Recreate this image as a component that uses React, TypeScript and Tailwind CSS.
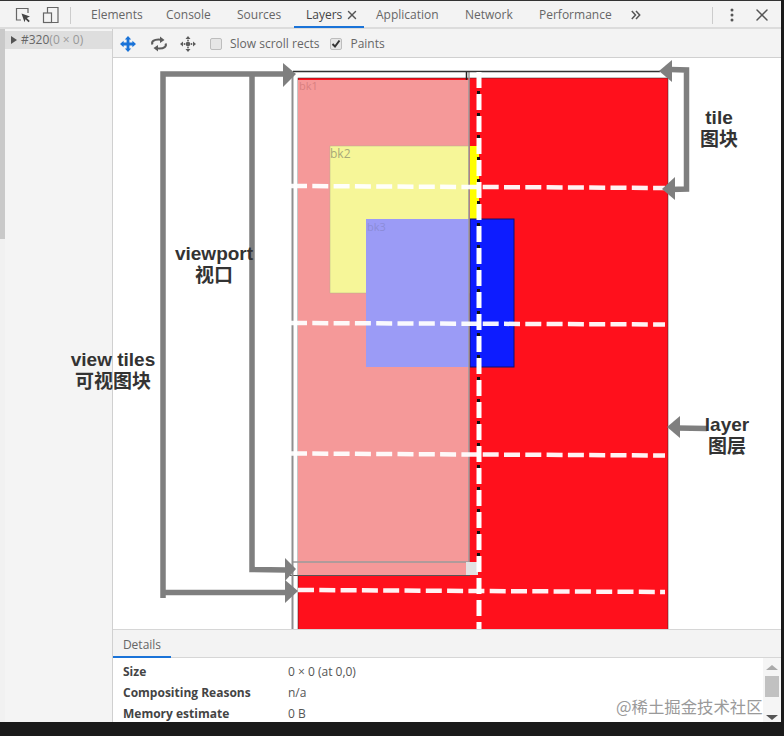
import React from "react";
import { X } from "lucide-react";

const tabs = [
    { name: "Elements", w: "w-[75px]" },
    { name: "Console", w: "w-[71px]" },
    { name: "Sources", w: "w-[69px]" },
    { name: "Layers", w: "w-[70px]" },
    { name: "Application", w: "w-[89px]" },
    { name: "Network", w: "w-[74px]" },
    { name: "Performance", w: "w-[93px]" },
];

const details = [
    { label: "Size", value: "0 × 0 (at 0,0)" },
    { label: "Compositing Reasons", value: "n/a" },
    { label: "Memory estimate", value: "0 B" },
];

const sans = "font-['Open_Sans','Noto_Sans',sans-serif]";
const label = "absolute -translate-x-1/2 whitespace-nowrap text-center text-[19px] leading-[22px] font-bold text-[#333] font-['Liberation_Sans','Noto_Sans_CJK_SC',sans-serif]";

function Toolbar() {
    return (
        <div className="flex h-[29px] shrink-0 items-center border-b border-[#d0d0d0] bg-[#f3f3f3] pt-[2px] text-[12px] text-[#666]">
            {/* pan, rotate, move */}
            <svg width="18" height="18" viewBox="0 0 18 18" className="ml-[6px]" fill="#1a73d8">
                <path d="M9 1l3.200 3.600h-1.800v3h3v-1.800l3.600 3.200-3.600 3.200v-1.800h-3v3h1.800l-3.200 3.600-3.200-3.600h1.800v-3h-3v1.800l-3.600-3.200 3.600-3.200v1.800h3v-3h-1.800z" />
            </svg>
            <svg width="18" height="18" viewBox="0 0 18 18" className="ml-[13px]" fill="none" stroke="#5c5c5c" strokeWidth="2">
                <path d="M2.500 9.500C1 6.500 4 4.500 8.500 4.500c1.500 0 3 .2 4 .6" />
                <path d="M15.500 8.500c1.500 3-1.500 5-6 5-1.500 0-3-.2-4-.6" />
                <path d="M10 1.500l4.500 3.500-4.500 3zM8 16.500l-4.500-3.500 4.500-3z" fill="#5c5c5c" stroke="none" />
            </svg>
            <svg width="18" height="18" viewBox="0 0 18 18" className="ml-[11px]" fill="#5c5c5c">
                <path d="M9 1l2.500 3h-5zM9 17l2.500-3h-5zM1 9l3-2.500v5zM17 9l-3-2.500v5z" />
                <circle cx="9" cy="9" r="2.300" />
                <circle cx="5.500" cy="9" r="0.900" />
                <circle cx="12.500" cy="9" r="0.900" />
                <circle cx="9" cy="5.500" r="0.900" />
                <circle cx="9" cy="12.500" r="0.900" />
            </svg>
            <span className="ml-[13px] h-3 w-3 rounded-[2px] border border-[#bdbdbd] bg-[#e6e6e6]" />
            <span className={`ml-[8px] ${sans}`}>Slow scroll rects</span>
            <span className="ml-[11px] flex h-3 w-3 items-center justify-center rounded-[2px] border border-[#bdbdbd] bg-[#e6e6e6]">
                <svg width="10" height="10" viewBox="0 0 10 10" fill="none" stroke="#333" strokeWidth="2">
                    <path d="M1.500 5l2.500 2.500 4.500-6" />
                </svg>
            </span>
            <span className={`ml-[8px] ${sans}`}>Paints</span>
        </div>
    );
}

// the layers diagram and the hand-drawn notes on top of it, in page coordinates
function Diagram() {
    return (
        <svg width="784" height="736" viewBox="0 0 784 736" className="pointer-events-none absolute top-0 left-0">
            <defs>
                <clipPath id="canvas">
                    <rect x="113" y="58" width="667" height="571" />
                </clipPath>
            </defs>
            <g clipPath="url(#canvas)">
                <rect x="298" y="78" width="370" height="560" fill="#ff101c" stroke="#222" strokeWidth="0.500" />
                <rect x="470" y="146" width="9" height="73" fill="#ffff00" />
                <rect x="470" y="219" width="44" height="148" fill="#0d1cff" stroke="#10106a" strokeWidth="1" />
                <rect x="298" y="80" width="171" height="495" fill="#f59999" />
                <rect x="330" y="146" width="139" height="147" fill="#f6f698" stroke="#b5b58a" strokeWidth="0.500" />
                <rect x="366" y="219" width="103" height="148" fill="#9b9bf6" />
                <path d="M469 72V562H293" fill="none" stroke="#9a9a9a" strokeWidth="1.500" />
                <rect x="466" y="562" width="12" height="13" fill="#e2e2e2" />
                <path d="M290 575.500h180" stroke="#555" strokeWidth="1" />
                <path d="M466.500 80V71.500" fill="none" stroke="#222" strokeWidth="1.500" />
                <path d="M293 71.500h367" stroke="#333" strokeWidth="1.300" />
                <path d="M292.500 72V630" stroke="#8f8f8f" strokeWidth="2" />
                <path d="M478.500 80V570" stroke="#111" strokeWidth="3" strokeDasharray="3 19" strokeDashoffset="-11" />
                <path d="M479 72V630" stroke="#fff" strokeWidth="5" strokeDasharray="16 6" />
                <g stroke="#fff" strokeWidth="4.500" strokeDasharray="16 5.300" fill="none" opacity="0.950">
                    <path d="M291 186L665 188" />
                    <path d="M291 323L665 324.500" />
                    <path d="M291 453.500L665 455.500" />
                    <path d="M298 590L665 592" />
                </g>
            </g>
            <g stroke="#7f7f7f" strokeWidth="5.500" fill="none">
                <path d="M163 598V74H285" />
                <path d="M163 592.500H286" />
                <path d="M252 75V569.500L286 570" />
                <path d="M670 69.500L686.500 70V189L670 189.500" />
                <path d="M676 428L707 428.500" />
            </g>
            <g fill="#7f7f7f">
                <path d="M283 63L296 74L283 87z" />
                <path d="M285 580L298 591L285 603z" />
                <path d="M285 558L296 569L285 581z" />
                <path d="M659 71L672 60V82z" />
                <path d="M662 189L675 177V200z" />
                <path d="M667 427L680 416V438z" />
            </g>
        </svg>
    );
}

export default function App() {
    return (
        <div className="relative h-[736px] w-[784px] overflow-hidden bg-[#1a1a1a]">
            <div className="flex h-[722px] w-[781px] flex-col border-t border-[#333] bg-white">
                {/* Tab strip */}
                <div className={`flex h-[28px] shrink-0 items-center border-b-2 border-[#dcdcdc] bg-[#f3f3f3] pt-[2px] text-[12px] text-[#666] ${sans}`}>
                    <svg width="18" height="18" viewBox="0 0 18 18" className="ml-[14px]" fill="none" stroke="#666" strokeWidth="1.200">
                        <path d="M7 14H2.500V2.500H14V7" />
                        <path d="M7.500 7.500L16 10.500 12.800 12 15.800 15 14.500 16.300 11.500 13.300 10.500 16.200z" fill="#444" stroke="none" />
                    </svg>
                    <svg width="18" height="18" viewBox="0 0 18 18" className="ml-[10px]" fill="none" stroke="#666" strokeWidth="1.200">
                        <path d="M5.500 7V1.500H16V16.500H10" />
                        <rect x="1.500" y="7" width="8" height="9.500" />
                    </svg>
                    <div className="ml-[10px] h-[17px] w-px bg-[#ccc]" />
                    <div className="ml-[8px] flex h-full items-center">
                        {tabs.map((t) => (
                            <div
                                key={t.name}
                                className={`flex h-full items-center pl-[12px] ${t.w} ${t.name === "Layers" ? "border-b-2 border-[#1a73d8] -mb-[2px] text-[#444]" : ""}`}
                            >
                                {t.name}
                                {t.name === "Layers" && <X size={14} strokeWidth={2.500} className="ml-[3px] text-[#555]" />}
                            </div>
                        ))}
                    </div>
                    <svg width="10" height="10" viewBox="0 0 10 10" className="ml-[11px]" fill="none" stroke="#555" strokeWidth="1.500">
                        <path d="M.8 1l3.700 4-3.700 4M5 1l3.700 4-3.700 4" />
                    </svg>
                    <div className="ml-auto h-[17px] w-px bg-[#ccc]" />
                    <svg width="4" height="14" viewBox="0 0 4 14" className="ml-[17px]" fill="#555">
                        <circle cx="2" cy="2" r="1.500" />
                        <circle cx="2" cy="7" r="1.500" />
                        <circle cx="2" cy="12" r="1.500" />
                    </svg>
                    <X size={20} strokeWidth={1.800} className="mr-[9px] ml-[18px] text-[#555]" />
                </div>

                <div className="flex min-h-0 flex-1">
                    {/* Left edge of the page scrollbar */}
                    <div className="flex w-[5px] shrink-0 flex-col bg-[#f1f1f1]">
                        <div className="h-[210px] w-full bg-[#c9c9c9]" />
                    </div>
                    {/* Layer tree */}
                    <div className={`w-[108px] shrink-0 border-r border-[#d0d0d0] bg-[#f4f4f4] pt-[2px] text-[12px] text-[#666] ${sans}`}>
                        <div className="flex h-[18px] items-center bg-[#dedede] pl-[6px]">
                            <span className="mr-[4px] h-0 w-0 border-y-[4px] border-l-[6px] border-y-transparent border-l-[#555]" />
                            #320<span className="text-[#999]">(0 × 0)</span>
                        </div>
                    </div>

                    <div className="flex min-w-0 flex-1 flex-col">
                        <Toolbar />
                        <div className="h-[571px] shrink-0 bg-white" />
                        {/* Details drawer */}
                        <div className={`flex h-[29px] shrink-0 items-stretch border-y border-[#d6d6d6] bg-[#f3f3f3] text-[12px] text-[#666] ${sans}`}>
                            <div className="flex w-[58px] items-center justify-center border-b-2 border-[#1a73d8] -mb-px pt-[3px]">Details</div>
                        </div>
                        <div className="relative min-h-0 flex-1 overflow-hidden pt-[3px] pl-[10px]">
                            {details.map((d) => (
                                <div key={d.label} className={`flex h-[21px] items-center text-[12px] text-[#555] ${sans}`}>
                                    <span className="w-[165px] font-bold text-[#444]">{d.label}</span>
                                    <span>{d.value}</span>
                                </div>
                            ))}
                            <div className="absolute top-0 right-0 flex h-full w-[18px] flex-col items-center bg-[#f5f5f5] pt-[7px]">
                                <span className="h-0 w-0 border-x-[6px] border-b-[5px] border-x-transparent border-b-[#aaa]" />
                                <span className="mt-[6px] h-[21px] w-[14px] bg-[#c1c1c1]" />
                                <span className="mt-[18px] h-0 w-0 border-x-[6px] border-t-[5px] border-x-transparent border-t-[#555]" />
                            </div>
                        </div>
                    </div>
                </div>
            </div>

            <Diagram />

            {/* Layer name captions */}
            <span className={`absolute top-[78px] left-[299px] text-[11px] text-[#d98080] ${sans}`}>bk1</span>
            <span className={`absolute top-[145px] left-[330px] text-[12px] text-[#a8a878] ${sans}`}>bk2</span>
            <span className={`absolute top-[219px] left-[367px] text-[11px] text-[#8c8cd8] ${sans}`}>bk3</span>

            {/* Annotations */}
            <div className={`${label} top-[243px] left-[214px]`}>viewport<br />视口</div>
            <div className={`${label} top-[349px] left-[113px]`}>view tiles<br />可视图块</div>
            <div className={`${label} top-[107px] left-[719px]`}>tile<br />图块</div>
            <div className={`${label} top-[414px] left-[727px]`}>layer<br />图层</div>

            <span className="absolute top-[695px] left-[616px] text-[16.400px] leading-[22px] whitespace-nowrap text-[#9a9a9a] font-['Noto_Sans_CJK_SC',sans-serif]">
                @稀土掘金技术社区
            </span>
        </div>
    );
}
